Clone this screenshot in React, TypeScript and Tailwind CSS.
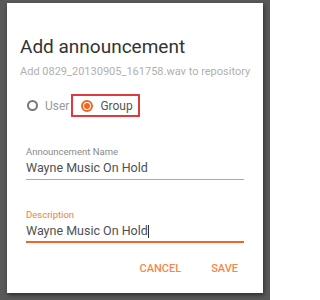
export default function App() {
  return (
    <div className="w-[270px] h-[300px] bg-[#595959] pt-[3px] pl-[7px] font-['Roboto',sans-serif]">
      <div className="w-[256px] h-[290px] bg-white shadow-[1px_2px_4px_rgba(0,0,0,0.5)] pl-[13px] pr-[19px] pt-[34px]">
        <h1 className="text-[19px] leading-[20px] text-[#333]">Add announcement</h1>
        <p className="mt-[9px] text-[11px] leading-[12px] text-[#b0b0b0] whitespace-nowrap">
          Add 0829_20130905_161758.wav to repository
        </p>
        <div className="mt-[16px] flex items-center h-[23px]">
          <label className="flex items-center gap-[7px] pl-[7px]">
            <span className="w-[11px] h-[11px] rounded-full border-[2px] border-[#777]" />
            <span className="text-[12px] text-[#9a9a9a]">User</span>
          </label>
          <label className="ml-[2px] h-[23px] w-[69px] border-[2px] border-[#e0393e] flex items-center gap-[7px] pl-[8px]">
            <span className="w-[12px] h-[12px] rounded-full border-[2px] border-[#f26522] flex items-center justify-center">
              <span className="w-[6px] h-[6px] rounded-full bg-[#f26522]" />
            </span>
            <span className="text-[12px] text-[#555]">Group</span>
          </label>
        </div>
        <div className="ml-[6px] mt-[30px]">
          <div className="text-[9.5px] leading-[10px] text-[#8a8a8a]">Announcement Name</div>
          <div className="mt-[3px] text-[12.5px] leading-[16px] text-[#505050] pb-[3px] border-b border-[#aaa]">
            Wayne Music On Hold
          </div>
        </div>
        <div className="ml-[6px] mt-[30px]">
          <div className="text-[9.5px] leading-[10px] text-[#f47c3c]">Description</div>
          <div className="mt-[3px] text-[12.5px] leading-[16px] text-[#505050] pb-[2px] border-b-2 border-[#f26522] flex items-center">
            Wayne Music On Hold<span className="inline-block w-[1px] h-[13px] bg-[#333]" />
          </div>
        </div>
        <div className="mt-[18px] flex justify-end gap-[30px] pr-[6px]">
          <button className="text-[11px] font-medium text-[#f5894a]">CANCEL</button>
          <button className="text-[11px] font-medium text-[#f5894a]">SAVE</button>
        </div>
      </div>
    </div>
  );
}
